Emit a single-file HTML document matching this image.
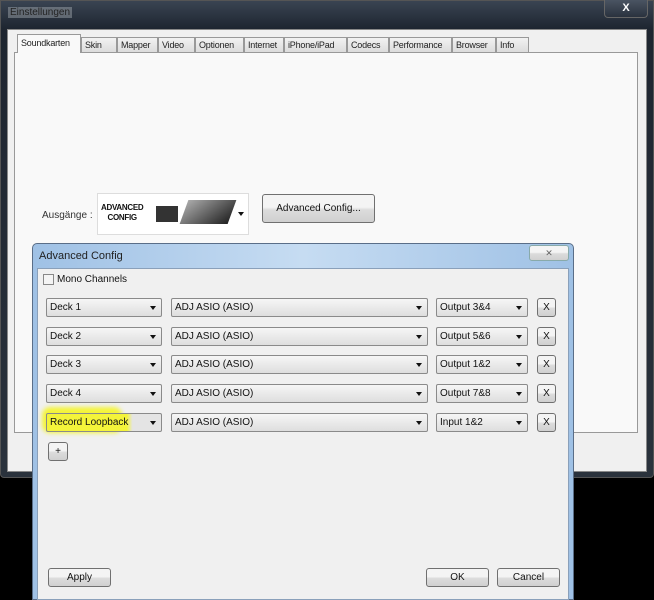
<!DOCTYPE html>
<html><head><style>
*{box-sizing:border-box;margin:0;padding:0}
body{width:654px;height:600px;background:#000;position:relative;overflow:hidden;font-family:"Liberation Sans",sans-serif;font-size:10px;color:#111}
.abs{position:absolute}
.outer{left:0;top:0;width:654px;height:478px;background:linear-gradient(#3a4452,#1e2530 28px,#2a323c);border:1px solid #555;border-radius:0 0 4px 4px}
.title{left:8px;top:7px;color:#222;font-size:10px;background:rgba(200,205,210,0.35);padding:0 2px}
.close{left:604px;top:0;width:44px;height:18px;border:1px solid #666;border-top:none;border-radius:0 0 4px 4px;background:linear-gradient(#4a5462,#2a323e);color:#fff;font-weight:bold;text-align:center;line-height:16px;font-size:11px}
.client{left:7px;top:29px;width:640px;height:443px;background:#f0f0f0;border:1px solid #888}
.panel{left:14px;top:52px;width:624px;height:381px;background:#f9f9f9;border:1px solid #999}
.tab{top:37px;height:15px;border:1px solid #999;border-bottom:none;background:linear-gradient(#f2f2f2,#dcdcdc);font-size:9px;line-height:14px;padding-left:3px;color:#222;letter-spacing:-0.2px;white-space:nowrap;overflow:hidden}
.tab.sel{top:34px;height:19px;background:#f9f9f9;z-index:2;line-height:17px}
.btn{border:1px solid #707070;border-radius:3px;background:linear-gradient(#f4f4f4 45%,#dcdcdc 55%,#d0d0d0);text-align:center;font-size:10px}
.dlg{left:32px;top:243px;width:542px;height:357px;background:linear-gradient(90deg,#9fc1e5,#c6dcf2 50%,#9fc1e5);border:1px solid #5a6e88;border-radius:5px 5px 0 0}
.dbody{left:37px;top:268px;width:532px;height:332px;background:#f0f0f0;border:1px solid #8aa0ba}
.cb{height:19px;border:1px solid #8a8a8a;border-radius:2px;background:linear-gradient(#f6f6f6,#dedede);font-size:10px;line-height:17px;padding-left:3px}
.cb::after{content:"";position:absolute;right:5px;top:7px;border:3px solid transparent;border-top:4px solid #111}
.x{width:19px;height:19px;line-height:17px}
</style></head><body>
<div class="abs outer"></div>
<div class="abs title">Einstellungen</div>
<div class="abs close">X</div>
<div class="abs client"></div>
<div class="abs panel"></div>
<div class="abs tab sel" style="left:17px;width:64px">Soundkarten</div>
<div class="abs tab" style="left:81px;width:36px">Skin</div>
<div class="abs tab" style="left:117px;width:41px">Mapper</div>
<div class="abs tab" style="left:158px;width:37px">Video</div>
<div class="abs tab" style="left:195px;width:49px">Optionen</div>
<div class="abs tab" style="left:244px;width:40px">Internet</div>
<div class="abs tab" style="left:284px;width:63px">iPhone/iPad</div>
<div class="abs tab" style="left:347px;width:42px">Codecs</div>
<div class="abs tab" style="left:389px;width:63px">Performance</div>
<div class="abs tab" style="left:452px;width:44px">Browser</div>
<div class="abs tab" style="left:496px;width:33px">Info</div>
<div class="abs" style="left:42px;top:210px;font-size:10px;color:#333">Ausgänge :</div>
<div class="abs" style="left:97px;top:193px;width:152px;height:42px;background:#fff;border:1px solid #ddd"></div>
<div class="abs" style="left:101px;top:203px;font-size:8px;font-weight:bold;line-height:10px;text-align:center;letter-spacing:-0.3px">ADVANCED<br>CONFIG</div>
<div class="abs" style="left:156px;top:206px;width:22px;height:16px;background:#333"></div>
<div class="abs" style="left:184px;top:200px;width:48px;height:24px;background:linear-gradient(135deg,#aaa,#222);transform:skewX(-20deg)"></div>
<div class="abs" style="left:238px;top:212px;border:3px solid transparent;border-top:4px solid #111"></div>
<div class="abs btn" style="left:262px;top:194px;width:113px;height:29px;line-height:27px">Advanced Config...</div>
<div class="abs dlg"></div>
<div class="abs" style="left:39px;top:250px;font-size:11px;color:#222">Advanced Config</div>
<div class="abs btn" style="left:529px;top:245px;width:40px;height:16px;font-size:9px;line-height:14px;color:#666;border-color:#8aa">✕</div>
<div class="abs dbody"></div>
<div class="abs" style="left:43px;top:274px;width:11px;height:11px;border:1px solid #888;background:#f4f4f4"></div>
<div class="abs" style="left:57px;top:274px;font-size:10px">Mono Channels</div>

<div class="abs cb" style="left:46px;top:298px;width:116px">Deck 1</div>
<div class="abs cb" style="left:171px;top:298px;width:257px">ADJ ASIO (ASIO)</div>
<div class="abs cb" style="left:436px;top:298px;width:92px">Output 3&amp;4</div>
<div class="abs btn x" style="left:537px;top:298px">X</div>

<div class="abs cb" style="left:46px;top:327px;width:116px">Deck 2</div>
<div class="abs cb" style="left:171px;top:327px;width:257px">ADJ ASIO (ASIO)</div>
<div class="abs cb" style="left:436px;top:327px;width:92px">Output 5&amp;6</div>
<div class="abs btn x" style="left:537px;top:327px">X</div>

<div class="abs cb" style="left:46px;top:355px;width:116px">Deck 3</div>
<div class="abs cb" style="left:171px;top:355px;width:257px">ADJ ASIO (ASIO)</div>
<div class="abs cb" style="left:436px;top:355px;width:92px">Output 1&amp;2</div>
<div class="abs btn x" style="left:537px;top:355px">X</div>

<div class="abs cb" style="left:46px;top:384px;width:116px">Deck 4</div>
<div class="abs cb" style="left:171px;top:384px;width:257px">ADJ ASIO (ASIO)</div>
<div class="abs cb" style="left:436px;top:384px;width:92px">Output 7&amp;8</div>
<div class="abs btn x" style="left:537px;top:384px">X</div>

<div class="abs" style="left:42px;top:407px;width:80px;height:26px;background:#f4f43a;border-radius:8px;filter:blur(2px)"></div>
<div class="abs cb" style="left:46px;top:413px;width:116px;background:linear-gradient(90deg,#f4f43a 70%,#e4e4e4 75%)">Record Loopback</div>
<div class="abs cb" style="left:171px;top:413px;width:257px">ADJ ASIO (ASIO)</div>
<div class="abs cb" style="left:436px;top:413px;width:92px">Input 1&amp;2</div>
<div class="abs btn x" style="left:537px;top:413px">X</div>

<div class="abs btn" style="left:48px;top:442px;width:20px;height:19px;line-height:17px">+</div>
<div class="abs btn" style="left:48px;top:568px;width:63px;height:19px;line-height:17px">Apply</div>
<div class="abs btn" style="left:426px;top:568px;width:63px;height:19px;line-height:17px">OK</div>
<div class="abs btn" style="left:497px;top:568px;width:63px;height:19px;line-height:17px">Cancel</div>
</body></html>
